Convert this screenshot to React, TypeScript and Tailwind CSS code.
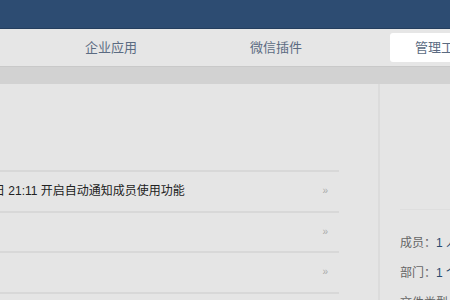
import React from 'react';

const font = { fontFamily: '"Liberation Sans", "Noto Sans CJK SC", sans-serif' };

const rows = [
  { text: '日 21:11 开启自动通知成员使用功能' },
  { text: '' },
  { text: '' },
];

export default function App() {
  return (
    <div className="w-[450px] h-[300px] overflow-hidden bg-[#e5e5e5]" style={font}>
      {/* top bar */}
      <div className="h-[29px] bg-[#2d4c72] border-b border-[#243e5e]" />

      {/* tabs */}
      <div className="h-[37px] flex items-center bg-[#e6e6e6] text-[13px] text-[#5b6b82] whitespace-nowrap">
        <div className="ml-[85px] w-[165px] shrink-0">企业应用</div>
        <div className="w-[140px] shrink-0">微信插件</div>
        <div className="h-[29px] w-[80px] shrink-0 rounded-[3px] bg-white pl-[25px] flex items-center">
          管理工具
        </div>
      </div>

      {/* gray strip */}
      <div className="h-[18px] bg-[#d2d2d2] border-t border-[#c9c9c9]" />

      {/* content */}
      <div className="flex h-[216px]">
        <div className="w-[380px] shrink-0 border-r-2 border-[#dcdcdc] pt-[86px]">
          <div className="w-[339px]">
            {rows.map((r, i) => (
              <div
                key={i}
                className="h-[40.5px] border-t-2 border-[#d8d8d8] flex items-center justify-between pr-[11px]"
              >
                <span className="-ml-[7px] text-[12px] text-[#222] whitespace-nowrap">{r.text}</span>
                <span className="text-[10px] text-[#aaa] leading-none">»</span>
              </div>
            ))}
            <div className="border-t-2 border-[#d8d8d8]" />
          </div>
        </div>
        <div className="flex-1 min-w-0 pl-[20px] pt-[125px] whitespace-nowrap">
          <div className="border-t border-[#dedede]" />
          <div className="pt-[18px] text-[12px] text-[#666] leading-[30px]">
            <div>
              成员：<span className="text-[#2b4a6f]">1 人</span>
            </div>
            <div>
              部门：<span className="text-[#2b4a6f]">1 个</span>
            </div>
            <div>文件类型</div>
          </div>
        </div>
      </div>
    </div>
  );
}
